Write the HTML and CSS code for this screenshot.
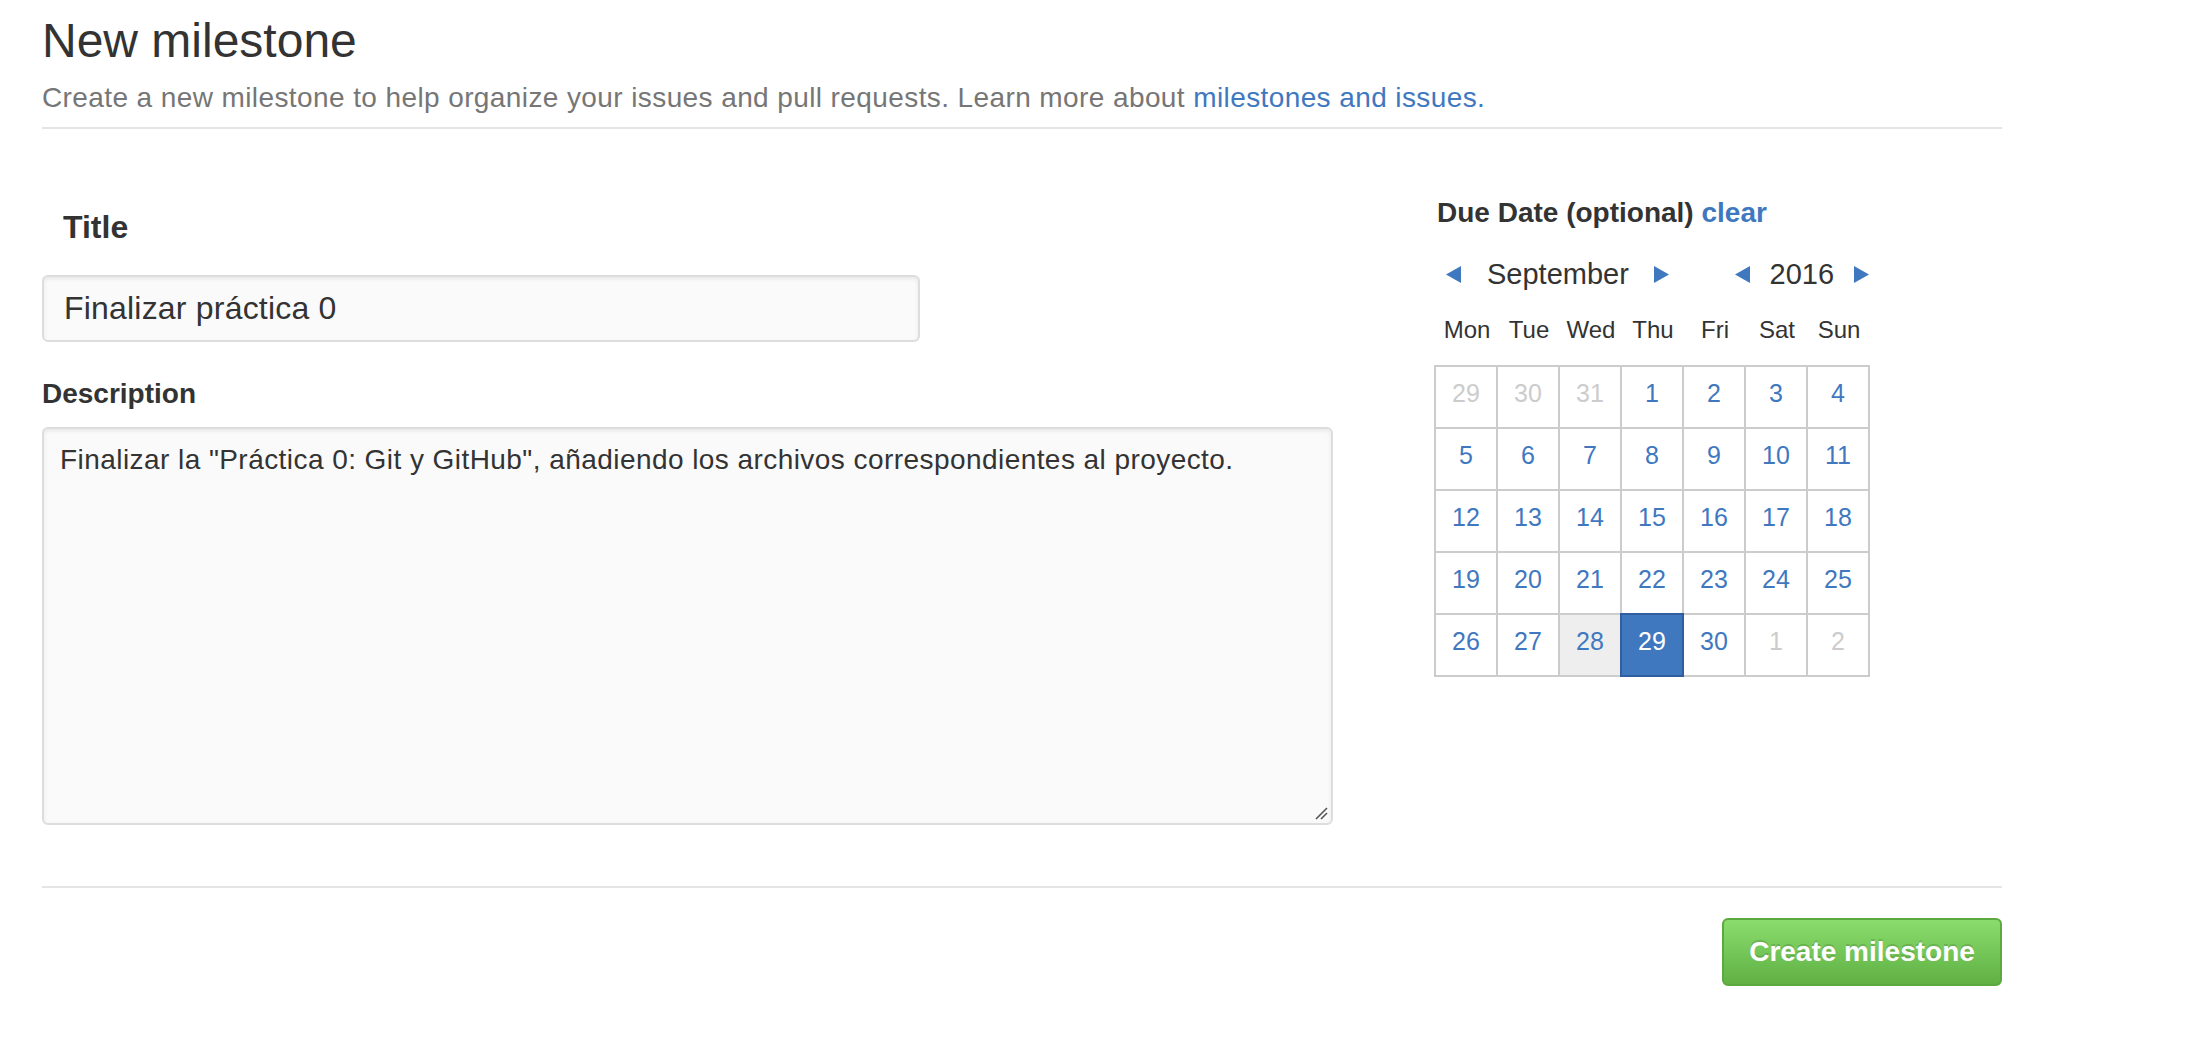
FILE: index.html
```html
<!DOCTYPE html>
<html lang="en">
<head>
<meta charset="utf-8">
<title>New milestone</title>
<link rel="stylesheet" href="styles.css">
</head>
<body>
<div class="container">
  <div class="subhead">
    <h1 class="subhead-heading">New milestone</h1>
    <p class="subhead-desc">Create a new milestone to help organize your issues and pull requests. Learn more about <a href="#" class="link">milestones and issues.</a></p>
  </div>

  <div class="form-main">
    <div class="col-left">
      <div class="title-label">Title</div>
      <div class="field field-title">Finalizar práctica 0</div>
      <div class="desc-label">Description</div>
      <div class="field field-desc">Finalizar la "Práctica 0: Git y GitHub", añadiendo los archivos correspondientes al proyecto.<svg class="grip" width="14" height="14" viewBox="0 0 14 14"><line x1="2" y1="13" x2="13" y2="2" stroke="#555" stroke-width="1.6"/><line x1="7" y1="13" x2="13" y2="7" stroke="#555" stroke-width="1.6"/></svg></div>
    </div>

    <div class="col-right">
      <div class="due-label">Due Date (optional) <a href="#" class="link">clear</a></div>
      <div class="cal-nav">
        <svg class="arrow arrow-first" width="17" height="17" viewBox="0 0 17 17"><polygon points="16,0 16,17 1,8.5" fill="#4078c0"/></svg>
        <span class="nav-month">September</span>
        <svg class="arrow" width="16" height="17" viewBox="0 0 16 17"><polygon points="0,0 0,17 15,8.5" fill="#4078c0"/></svg>
        <span class="nav-spacer"></span>
        <svg class="arrow" width="16" height="17" viewBox="0 0 16 17"><polygon points="16,0 16,17 1,8.5" fill="#4078c0"/></svg>
        <span class="nav-year">2016</span>
        <svg class="arrow" width="16" height="17" viewBox="0 0 16 17"><polygon points="0,0 0,17 15,8.5" fill="#4078c0"/></svg>
      </div>
      <div class="cal-days">
        <span>Mon</span><span>Tue</span><span>Wed</span><span>Thu</span><span>Fri</span><span>Sat</span><span>Sun</span>
      </div>
      <div class="cal-grid">
        <span class="day muted">29</span><span class="day muted">30</span><span class="day muted">31</span><span class="day">1</span><span class="day">2</span><span class="day">3</span><span class="day">4</span>
        <span class="day">5</span><span class="day">6</span><span class="day">7</span><span class="day">8</span><span class="day">9</span><span class="day">10</span><span class="day">11</span>
        <span class="day">12</span><span class="day">13</span><span class="day">14</span><span class="day">15</span><span class="day">16</span><span class="day">17</span><span class="day">18</span>
        <span class="day">19</span><span class="day">20</span><span class="day">21</span><span class="day">22</span><span class="day">23</span><span class="day">24</span><span class="day">25</span>
        <span class="day">26</span><span class="day">27</span><span class="day today">28</span><span class="day selected">29</span><span class="day">30</span><span class="day muted">1</span><span class="day muted">2</span>
      </div>
    </div>
  </div>

  <div class="form-actions">
    <button class="btn-primary" type="button">Create milestone</button>
  </div>
</div>
</body>
</html>
```

FILE: styles.css
```css
html, body {
  margin: 0;
  padding: 0;
  background: #fff;
}

body {
  font-family: "Liberation Sans", Arial, sans-serif;
  color: #333;
}

.container {
  width: 1960px;
  margin-left: 42px;
}

.link {
  color: #4078c0;
  text-decoration: none;
}

/* Subhead */
.subhead {
  padding-top: 13px;
  padding-bottom: 9px;
  border-bottom: 2px solid #e5e5e5;
}

.subhead-heading {
  margin: 0;
  font-size: 48px;
  line-height: 56px;
  font-weight: normal;
  color: #333;
}

.subhead-desc {
  margin: 9px 0 0;
  font-size: 28px;
  line-height: 40px;
  letter-spacing: 0.4px;
  color: #767676;
}

/* Main form */
.form-main {
  display: flex;
}

.col-left {
  width: 1291px;
  padding-top: 78px;
}

.col-right {
  width: 436px;
  margin-left: 101px;
  padding-top: 64px;
}

.title-label {
  padding-left: 21px;
  font-size: 32px;
  line-height: 40px;
  font-weight: bold;
}

.field {
  box-sizing: border-box;
  background: #fafafa;
  border: 2px solid #ddd;
  border-radius: 6px;
  box-shadow: inset 0 2px 4px rgba(0, 0, 0, 0.075);
  color: #333;
}

.field-title {
  margin-top: 28px;
  width: 878px;
  height: 67px;
  padding: 0 20px;
  display: flex;
  align-items: center;
  font-size: 32px;
  letter-spacing: 0.2px;
}

.desc-label {
  margin-top: 32px;
  font-size: 28px;
  line-height: 40px;
  font-weight: bold;
}

.field-desc {
  position: relative;
  margin-top: 13px;
  width: 1291px;
  height: 398px;
  padding: 11px 16px;
  font-size: 28px;
  line-height: 40px;
  letter-spacing: 0.44px;
}

.grip {
  position: absolute;
  right: 3px;
  bottom: 3px;
}

/* Calendar */
.due-label {
  padding-left: 3px;
  font-size: 28px;
  line-height: 40px;
  font-weight: bold;
}

.cal-nav {
  margin-top: 21px;
  height: 40px;
  display: flex;
  align-items: center;
  padding-left: 11px;
  font-size: 29px;
  color: #333;
}

.arrow {
  flex: none;
  display: block;
}

.nav-month {
  width: 195px;
  text-align: center;
}

.nav-spacer {
  width: 65px;
}

.nav-year {
  width: 106px;
  text-align: center;
}

.cal-days {
  margin-top: 19px;
  display: grid;
  grid-template-columns: repeat(7, 62px);
  padding-left: 2px;
  font-size: 24px;
  line-height: 34px;
  text-align: center;
  color: #333;
}

.cal-grid {
  margin-top: 18px;
  display: grid;
  grid-template-columns: repeat(7, 62px);
  width: 434px;
  border-left: 2px solid #ccc;
  border-top: 2px solid #ccc;
}

.day {
  box-sizing: border-box;
  height: 62px;
  border-right: 2px solid #ccc;
  border-bottom: 2px solid #ccc;
  font-size: 25px;
  line-height: 52px;
  text-align: center;
  color: #4078c0;
}

.day.muted {
  color: #ccc;
}

.day.today {
  background: #eee;
}

.day.selected {
  position: relative;
  z-index: 1;
  background: #4078c0;
  color: #fff;
  border-right-color: #2f5f9e;
  border-bottom-color: #2f5f9e;
  box-shadow: -2px -2px 0 0 #2f5f9e, 0 -2px 0 0 #2f5f9e, -2px 0 0 0 #2f5f9e;
}

/* Actions */
.form-actions {
  margin-top: 61px;
  padding-top: 30px;
  border-top: 2px solid #e5e5e5;
  display: flex;
  justify-content: flex-end;
}

.btn-primary {
  box-sizing: border-box;
  width: 280px;
  height: 68px;
  padding: 0;
  border: 2px solid #5ca941;
  border-radius: 6px;
  background-image: linear-gradient(#8add6d, #60b044);
  color: #fff;
  font-family: "Liberation Sans", Arial, sans-serif;
  font-size: 28px;
  font-weight: bold;
  text-shadow: 0 -2px 0 rgba(0, 0, 0, 0.15);
  cursor: pointer;
}
```
